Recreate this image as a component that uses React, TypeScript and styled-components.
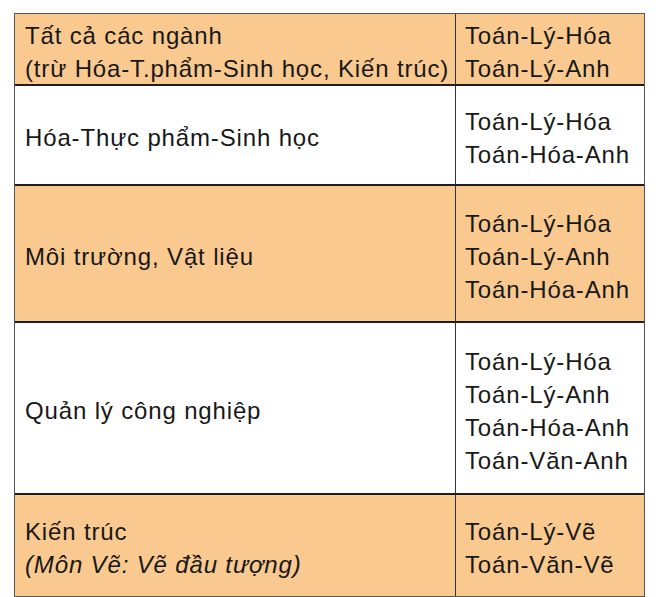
import React from 'react';
import styled, { createGlobalStyle } from 'styled-components';

const GlobalStyle = createGlobalStyle`
  html, body {
    margin: 0;
    padding: 0;
    background: #ffffff;
  }
`;

const peach = '#f9c990';
const line = '#1e1e1e';

interface Row {
  major: string[];
  note?: string;
  combos: string[];
  height: number;
  shaded: boolean;
}

const rows: Row[] = [
  {
    major: ['Tất cả các ngành', '(trừ Hóa-T.phẩm-Sinh học, Kiến trúc)'],
    combos: ['Toán-Lý-Hóa', 'Toán-Lý-Anh'],
    height: 72,
    shaded: true,
  },
  {
    major: ['Hóa-Thực phẩm-Sinh học'],
    combos: ['Toán-Lý-Hóa', 'Toán-Hóa-Anh'],
    height: 100,
    shaded: false,
  },
  {
    major: ['Môi trường, Vật liệu'],
    combos: ['Toán-Lý-Hóa', 'Toán-Lý-Anh', 'Toán-Hóa-Anh'],
    height: 137,
    shaded: true,
  },
  {
    major: ['Quản lý công nghiệp'],
    combos: ['Toán-Lý-Hóa', 'Toán-Lý-Anh', 'Toán-Hóa-Anh', 'Toán-Văn-Anh'],
    height: 172,
    shaded: false,
  },
  {
    major: ['Kiến trúc'],
    note: '(Môn Vẽ: Vẽ đầu tượng)',
    combos: ['Toán-Lý-Vẽ', 'Toán-Văn-Vẽ'],
    height: 101,
    shaded: true,
  },
];

const Page = styled.div`
  padding: 13px 20px 0 14px;
  font-family: 'Liberation Sans', Arial, sans-serif;
  color: #181818;
`;

const Table = styled.div`
  width: 631px;
  box-sizing: border-box;
  border: 1px solid #555;
`;

const TableRow = styled.div<{ $shaded: boolean; $height: number; $last: boolean }>`
  display: grid;
  grid-template-columns: 441px 1fr;
  height: ${p => p.$height}px;
  box-sizing: border-box;
  background: ${p => (p.$shaded ? peach : '#ffffff')};
  border-bottom: ${p => (p.$last ? 'none' : `2px solid ${line}`)};
`;

const MajorCell = styled.div`
  display: flex;
  flex-direction: column;
  justify-content: center;
  padding: 5px 0 0 10px;
  border-right: 1px solid #333;
`;

const ComboCell = styled.div`
  display: flex;
  flex-direction: column;
  justify-content: center;
  padding: 5px 0 0 9px;
`;

const Line = styled.div`
  font-size: 24px;
  line-height: 33px;
  letter-spacing: 0.85px;
  white-space: nowrap;
`;

const Note = styled(Line)`
  font-style: italic;
`;

export default function App() {
  return (
    <>
      <GlobalStyle />
      <Page>
        <Table>
          {rows.map((row, i) => (
            <TableRow key={i} $shaded={row.shaded} $height={row.height} $last={i === rows.length - 1}>
              <MajorCell>
                {row.major.map(m => (
                  <Line key={m}>{m}</Line>
                ))}
                {row.note && <Note>{row.note}</Note>}
              </MajorCell>
              <ComboCell>
                {row.combos.map(c => (
                  <Line key={c}>{c}</Line>
                ))}
              </ComboCell>
            </TableRow>
          ))}
        </Table>
      </Page>
    </>
  );
}
